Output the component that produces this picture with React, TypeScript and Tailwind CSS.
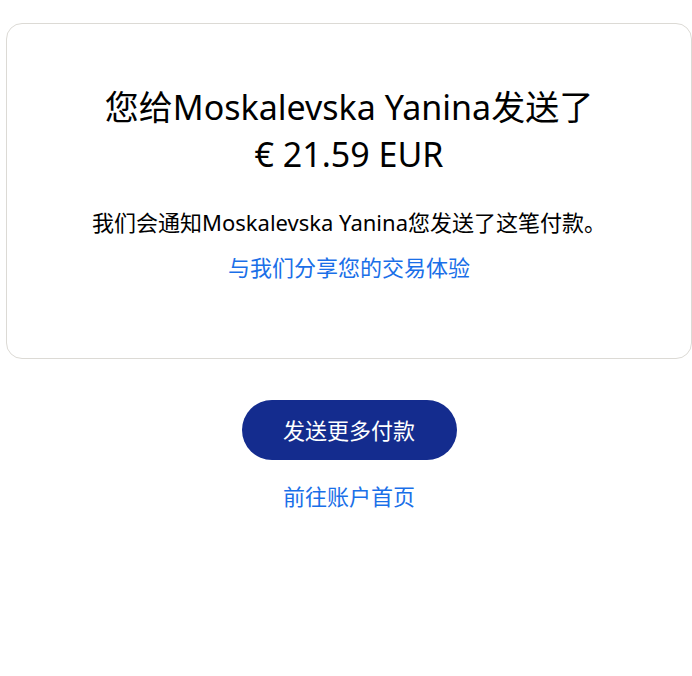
import React from "react";

const font = {
  fontFamily: '"Noto Sans", "Noto Sans CJK SC", sans-serif',
};

export default function App() {
  return (
    <div className="min-h-[676px] w-full bg-white text-[#000000]" style={font}>
      <div className="pt-[23px] pl-[6px]">
        <div className="flex flex-col items-center rounded-2xl border border-[#dcdad5] pt-[60px] pb-[76px] px-8 text-center">
          <h1 className="text-[34px] leading-[47px] font-normal">
            您给Moskalevska Yanina发送了
            <br />€ 21.59 EUR
          </h1>
          <p className="mt-[29px] text-[22px] leading-[30px]">
            我们会通知Moskalevska Yanina您发送了这笔付款。
          </p>
          <a className="mt-[15px] text-[22px] leading-[30px] text-[#1a6fe8]" href="#">
            与我们分享您的交易体验
          </a>
        </div>
      </div>
      <div className="flex flex-col items-center pl-[6px] pt-[41px]">
        <button className="h-[60px] w-[215px] rounded-full bg-[#142c8e] text-[22px] text-white">
          发送更多付款
        </button>
        <a className="mt-[21px] text-[22px] leading-[30px] text-[#1a6fe8]" href="#">
          前往账户首页
        </a>
      </div>
    </div>
  );
}
